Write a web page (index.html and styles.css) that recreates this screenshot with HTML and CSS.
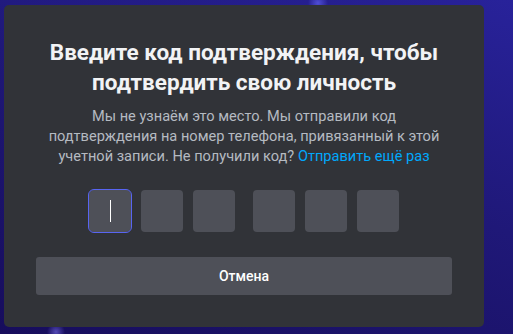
FILE: index.html
```html
<!DOCTYPE html>
<html lang="ru">
<head>
    <meta charset="UTF-8">
    <meta name="viewport" content="width=device-width, initial-scale=1.0">
    <title>Подтверждение</title>
    <link rel="stylesheet" href="styles.css">
</head>
<body>

    <div class="modal">
        <h1>Введите код подтверждения, чтобы<br>подтвердить свою личность</h1>
        <p class="desc">
            Мы не узнаём это место. Мы отправили код<br>подтверждения на номер телефона, привязанный к этой<br>учетной записи. Не получили код? <a href="#" class="link">Отправить ещё раз</a>
        </p>

        <div class="code">
            <div class="group">
                <div class="digit focused"><span class="caret"></span></div>
                <div class="digit"></div>
                <div class="digit"></div>
            </div>
            <div class="group">
                <div class="digit"></div>
                <div class="digit"></div>
                <div class="digit"></div>
            </div>
        </div>

        <button type="button" class="cancel">Отмена</button>
    </div>

</body>
</html>
```

FILE: styles.css
```css
html, body {
    height: 100%;
}
body {
    margin: 0;
    padding: 5px 0 0 4px;
    box-sizing: border-box;
    font-family: Roboto, "Noto Sans", sans-serif;
    background:
        radial-gradient(circle at 318px 3px, rgba(90, 90, 230, 0.8) 0, rgba(90, 90, 230, 0) 10px),
        radial-gradient(circle at 56px 332px, rgba(110, 100, 220, 0.7) 0, rgba(110, 100, 220, 0) 9px),
        linear-gradient(200deg, #28229a 0%, #1f1878 45%, #170d5c 100%);
    overflow: hidden;
}
.modal {
    width: 480px;
    box-sizing: border-box;
    padding: 32px;
    background: #313338;
    border-radius: 5px;
    text-align: center;
}
h1 {
    margin: 0;
    font-size: 22.5px;
    line-height: 30px;
    font-weight: 700;
    color: #f2f3f5;
    white-space: nowrap;
}
.desc {
    margin: 9px 0 0;
    font-size: 14.6px;
    line-height: 20px;
    color: #b5bac1;
    white-space: nowrap;
}
.link {
    color: #00a8fc;
    text-decoration: none;
}
.code {
    display: flex;
    justify-content: center;
    gap: 18px;
    margin-top: 24px;
}
.group {
    display: flex;
    gap: 10px;
}
.digit {
    width: 42px;
    height: 42px;
    background: #4e5058;
    border-radius: 4px;
    display: flex;
    align-items: center;
    justify-content: center;
}
.digit.focused {
    outline: 1px solid #5865f2;
    border-radius: 5px;
}
.caret {
    width: 1px;
    height: 22px;
    background: #ffffff;
}
.cancel {
    display: block;
    width: 100%;
    height: 38px;
    margin-top: 25px;
    border: none;
    border-radius: 3px;
    background: #4e5058;
    color: #ffffff;
    font-family: Roboto, "Noto Sans", sans-serif;
    font-size: 14px;
    font-weight: 500;
    cursor: pointer;
}
```
